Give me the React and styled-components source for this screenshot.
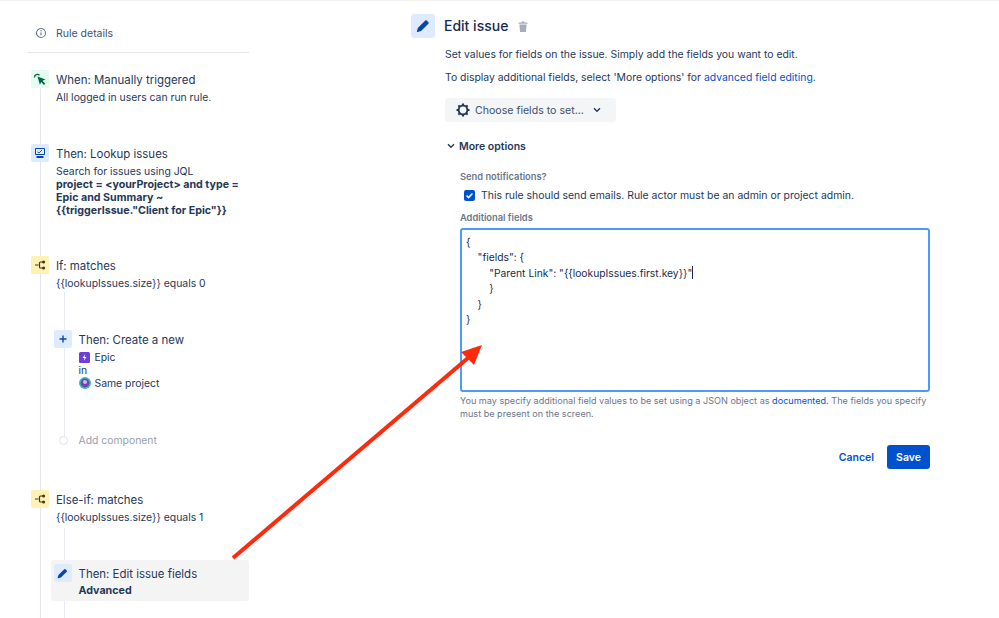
import React from 'react';
import styled, { createGlobalStyle } from 'styled-components';

const GlobalStyle = createGlobalStyle`
  html, body {
    margin: 0;
    padding: 0;
    background: #fff;
  }
  * {
    box-sizing: border-box;
  }
`;

const Page = styled.div`
  position: relative;
  width: 999px;
  height: 618px;
  overflow: hidden;
  display: flex;
  background: #fff;
  border-top: 1px solid #f1f1f1;
  font-family: Inter, "Liberation Sans", sans-serif;
  color: #253858;
`;

const Sidebar = styled.aside`
  width: 221px;
  margin-left: 28px;
  flex-shrink: 0;
`;

const DetailsRow = styled.div`
  display: flex;
  align-items: center;
  gap: 9px;
  height: 52px;
  padding: 13px 0 0 7px;
  border-bottom: 1px solid #e4e6ee;
  font-size: 10.5px;
  color: #42526e;
`;

const Timeline = styled.div`
  margin: 17px 0 0 12px;
  height: 560px;
  border-left: 1.5px solid #e3e5f0;
`;

const Step = styled.div`
  display: flex;
  gap: 7px;
  height: ${props => props.$height}px;
  margin-left: -10px;
`;

const IconBox = styled.div`
  width: 18px;
  height: 18px;
  flex-shrink: 0;
  display: flex;
  align-items: center;
  justify-content: center;
  border-radius: 2px;
  background: ${props => props.$bg};
`;

const StepBody = styled.div`
  padding-top: 2.5px;
`;

const StepTitle = styled.div`
  font-size: 11.45px;
  line-height: 15px;
  color: #253858;
`;

const StepText = styled.div`
  margin-top: 3px;
  font-size: 10.4px;
  line-height: 13px;
  color: #253858;
`;

const StrongText = styled.div`
  margin-top: ${props => props.$top || 0}px;
  font-size: 10.7px;
  line-height: 13px;
  font-weight: 700;
  color: #253858;
`;

const TypeLine = styled.div`
  display: flex;
  align-items: center;
  gap: 4px;
  font-size: 10.4px;
  line-height: 13px;
`;

const Nested = styled.div`
  margin: 0 0 ${props => props.$bottom || 0}px 22.5px;
  height: ${props => props.$height}px;
  padding-top: ${props => props.$top}px;
  border-left: 1.5px solid #e9ebf2;
`;

const NestedStep = styled.div`
  display: flex;
  gap: 7px;
  margin-left: -11px;
  height: 104px;
`;

const AddRow = styled.div`
  display: flex;
  align-items: center;
  gap: 11px;
  margin-left: -6px;
  font-size: 10.4px;
  line-height: 13px;
  color: #97a0af;
`;

const AddDot = styled.span`
  width: 9px;
  height: 9px;
  border-radius: 50%;
  background: #fff;
  border: 1.5px solid #dfe1e6;
`;

const SelectedStep = styled.div`
  display: flex;
  gap: 7px;
  width: 198px;
  height: 41px;
  margin-left: -14px;
  padding: 4px 3px;
  border-radius: 3px;
  background: #f4f4f5;
`;

const Main = styled.main`
  margin-left: 161px;
  width: 520px;
  padding-top: 13px;
`;

const Header = styled.header`
  display: flex;
  align-items: center;
  gap: 9px;
  margin-left: 1px;
`;

const HeaderIcon = styled.div`
  width: 24px;
  height: 24px;
  display: flex;
  align-items: center;
  justify-content: center;
  border-radius: 3px;
  background: #deebff;
`;

const Title = styled.h1`
  margin: 0 1px 0 0;
  font-size: 14px;
  line-height: 24px;
  font-weight: 500;
  color: #172b4d;
`;

const Content = styled.div`
  padding-left: 35px;
`;

const Paragraph = styled.p`
  margin: ${props => props.$top}px 0 0;
  font-size: 10.4px;
  line-height: 14px;
  color: #253858;
`;

const Link = styled.a`
  color: #0052cc;
`;

const FieldButton = styled.div`
  display: inline-flex;
  align-items: center;
  width: 171px;
  height: 24px;
  margin-top: 13px;
  padding-left: 11px;
  border-radius: 3px;
  background: #f4f5f7;
  font-size: 10.6px;
  color: #42526e;
`;

const ButtonLabel = styled.span`
  margin: 0 9px 0 5px;
`;

const Expander = styled.div`
  display: flex;
  align-items: center;
  gap: 4px;
  margin: 16px 0 0 2px;
  height: 16px;
  font-size: 10.5px;
  font-weight: 600;
  color: #253858;
`;

const Options = styled.div`
  padding-left: 15px;
`;

const FieldLabel = styled.div`
  margin-top: ${props => props.$top}px;
  font-size: 9.3px;
  line-height: 12px;
  font-weight: 600;
  color: #6b778c;
`;

const CheckRow = styled.div`
  display: flex;
  align-items: center;
  gap: 6px;
  height: 14px;
  margin: 5px 0 0 4px;
  font-size: 10.45px;
  color: #253858;
`;

const CheckBox = styled.span`
  width: 11px;
  height: 11px;
  display: flex;
  align-items: center;
  justify-content: center;
  border-radius: 2px;
  background: #0052cc;
`;

const CodeBox = styled.div`
  width: 470px;
  height: 164px;
  margin-top: 4px;
  padding: 5px 4px;
  border: 2px solid #4c9aff;
  border-radius: 3px;
  font-size: 10.3px;
  line-height: 15.4px;
  color: #172b4d;
  white-space: pre;
`;

const Caret = styled.span`
  display: inline-block;
  width: 1px;
  height: 13px;
  vertical-align: -2px;
  background: #172b4d;
`;

const Helper = styled.p`
  width: 475px;
  margin: 3px 0 0;
  font-size: 9.1px;
  line-height: 12.5px;
  color: #6b778c;
`;

const Actions = styled.div`
  display: flex;
  align-items: center;
  justify-content: flex-end;
  gap: 13px;
  width: 470px;
  margin-top: 25px;
`;

const CancelButton = styled.span`
  font-size: 10.5px;
  font-weight: 600;
  color: #0052cc;
`;

const SaveButton = styled.span`
  width: 43px;
  height: 24px;
  display: flex;
  align-items: center;
  justify-content: center;
  border-radius: 3px;
  background: #0052cc;
  font-size: 10.5px;
  font-weight: 600;
  color: #fff;
`;

const ArrowOverlay = styled.svg`
  position: absolute;
  top: -1px;
  left: 0;
  pointer-events: none;
`;

const InfoIcon = () => (
  <svg width="12" height="12" viewBox="0 0 12 12" fill="none">
    <circle cx="6" cy="6" r="4.5" stroke="#6b778c" strokeWidth="1.1" />
    <path d="M6 5.4v2.8" stroke="#6b778c" strokeWidth="1.2" />
    <circle cx="6" cy="3.8" r=".7" fill="#6b778c" />
  </svg>
);

const TriggerIcon = () => (
  <svg width="14" height="14" viewBox="0 0 14 14" fill="none">
    <path d="M1.5 5.5a3 3 0 0 1 5-2.3" stroke="#006644" strokeWidth="1.3" />
    <path d="M4.5 4.5l8 3-3 1.3 2.8 3-1.4 1.2-2.6-3-1.4 2.8z" fill="#006644" />
  </svg>
);

const LookupIcon = () => (
  <svg width="12" height="12" viewBox="0 0 12 12" fill="none">
    <rect x="1" y="1" width="10" height="7" rx="1" fill="#0747a6" />
    <rect x="2" y="2" width="8" height="5" fill="#deebff" />
    <path d="M3.5 5l1.5 1 3-3" stroke="#0747a6" strokeWidth=".9" />
    <rect x="2.5" y="9" width="7" height="2" rx=".5" fill="#0747a6" />
  </svg>
);

const BranchIcon = () => (
  <svg width="12" height="12" viewBox="0 0 12 12" fill="none" stroke="#403a1f" strokeWidth="1.2">
    <path d="M1 6h3.5M9 3H6.5a1 1 0 0 0-1 1v4a1 1 0 0 0 1 1H9" />
    <circle cx="9.6" cy="3" r=".9" fill="#403a1f" />
    <circle cx="9.6" cy="9" r=".9" fill="#403a1f" />
  </svg>
);

const PlusIcon = () => (
  <svg width="10" height="10" viewBox="0 0 10 10" fill="none">
    <path d="M5 1.5v7M1.5 5h7" stroke="#0747a6" strokeWidth="1.4" />
  </svg>
);

const PencilIcon = ({ size }) => (
  <svg width={size} height={size} viewBox="0 0 14 14" fill="none">
    <path d="M9.3 1.6a1 1 0 0 1 1.4 0l1.7 1.7a1 1 0 0 1 0 1.4L5 12.1l-3.6.9a.4.4 0 0 1-.5-.5l.9-3.6z" fill="#0747a6" />
  </svg>
);

const EpicIcon = () => (
  <svg width="12" height="11" viewBox="0 0 12 11">
    <rect width="11" height="11" rx="1.5" fill="#6d3fd6" />
    <path d="M6.3 2L3.5 6h2l-.8 3 2.8-4h-2z" fill="#fff" />
  </svg>
);

const ProjectIcon = () => (
  <svg width="12" height="12" viewBox="0 0 12 12">
    <circle cx="6" cy="6" r="6" fill="#35bdb5" />
    <circle cx="6" cy="6" r="4.4" fill="#7a3fb0" />
    <circle cx="6" cy="5" r="2" fill="#b9c6e8" />
  </svg>
);

const TrashIcon = () => (
  <svg width="10" height="11" viewBox="0 0 10 11">
    <path d="M0.5 1.5h3l.4-1h2.2l.4 1h3v1.2h-9z" fill="#a5adba" />
    <path d="M1.4 3.4h7.2l-.6 7a.6.6 0 0 1-.6.6H2.6a.6.6 0 0 1-.6-.6z" fill="#a5adba" />
  </svg>
);

const GearIcon = () => (
  <svg width="14" height="14" viewBox="0 0 14 14" fill="none">
    <circle cx="7" cy="7" r="4.4" stroke="#253858" strokeWidth="2" />
    <g stroke="#253858" strokeWidth="2">
      <path d="M7 0.5v2M7 11.5v2M0.5 7h2M11.5 7h2" />
      <path d="M2.4 2.4l1.4 1.4M10.2 10.2l1.4 1.4M2.4 11.6l1.4-1.4M10.2 3.8l1.4-1.4" />
    </g>
  </svg>
);

const Chevron = () => (
  <svg width="8" height="6" viewBox="0 0 8 6" fill="none">
    <path d="M1 1.2l3 3 3-3" stroke="#253858" strokeWidth="1.4" />
  </svg>
);

const CheckMark = () => (
  <svg width="9" height="9" viewBox="0 0 9 9" fill="none">
    <path d="M1.6 4.6l2 2 3.8-4" stroke="#fff" strokeWidth="1.5" />
  </svg>
);

const codeBefore = `{
    "fields": {
        "Parent Link": "{{lookupIssues.first.key}}"`;
const codeAfter = `
        }
    }
}`;

export default function App() {
  return (
    <Page>
      <GlobalStyle />
      <Sidebar>
        <DetailsRow>
          <InfoIcon />
          Rule details
        </DetailsRow>
        <Timeline>
          <Step $height={74}>
            <IconBox $bg="#e3fcef"><TriggerIcon /></IconBox>
            <StepBody>
              <StepTitle>When: Manually triggered</StepTitle>
              <StepText>All logged in users can run rule.</StepText>
            </StepBody>
          </Step>
          <Step $height={112}>
            <IconBox $bg="#deebff"><LookupIcon /></IconBox>
            <StepBody>
              <StepTitle>Then: Lookup issues</StepTitle>
              <StepText>Search for issues using JQL</StepText>
              <StrongText>
                project = &lt;yourProject&gt; and type =<br />
                Epic and Summary ~<br />
                {'{{triggerIssue."Client for Epic"}}'}
              </StrongText>
            </StepBody>
          </Step>
          <Step $height={36}>
            <IconBox $bg="#fff0b3"><BranchIcon /></IconBox>
            <StepBody>
              <StepTitle>If: matches</StepTitle>
              <StepText>{'{{lookupIssues.size}} equals 0'}</StepText>
            </StepBody>
          </Step>
          <Nested $height={148} $top={38} $bottom={50}>
            <NestedStep>
              <IconBox $bg="#deebff"><PlusIcon /></IconBox>
              <StepBody>
                <StepTitle>Then: Create a new</StepTitle>
                <StepText>
                  <TypeLine><EpicIcon />Epic</TypeLine>
                  in
                  <TypeLine><ProjectIcon />Same project</TypeLine>
                </StepText>
              </StepBody>
            </NestedStep>
            <AddRow><AddDot />Add component</AddRow>
          </Nested>
          <Step $height={38}>
            <IconBox $bg="#fff0b3"><BranchIcon /></IconBox>
            <StepBody>
              <StepTitle>Else-if: matches</StepTitle>
              <StepText>{'{{lookupIssues.size}} equals 1'}</StepText>
            </StepBody>
          </Step>
          <Nested $height={90} $top={32}>
            <SelectedStep>
              <IconBox $bg="#deebff"><PencilIcon size={11} /></IconBox>
              <StepBody>
                <StepTitle>Then: Edit issue fields</StepTitle>
                <StrongText $top={2}>Advanced</StrongText>
              </StepBody>
            </SelectedStep>
          </Nested>
        </Timeline>
      </Sidebar>
      <Main>
        <Header>
          <HeaderIcon><PencilIcon size={14} /></HeaderIcon>
          <Title>Edit issue</Title>
          <TrashIcon />
        </Header>
        <Content>
          <Paragraph $top={10}>Set values for fields on the issue. Simply add the fields you want to edit.</Paragraph>
          <Paragraph $top={9}>
            To display additional fields, select 'More options' for <Link>advanced field editing</Link>.
          </Paragraph>
          <FieldButton>
            <GearIcon />
            <ButtonLabel>Choose fields to set...</ButtonLabel>
            <Chevron />
          </FieldButton>
          <Expander><Chevron />More options</Expander>
          <Options>
            <FieldLabel $top={17}>Send notifications?</FieldLabel>
            <CheckRow>
              <CheckBox><CheckMark /></CheckBox>
              This rule should send emails. Rule actor must be an admin or project admin.
            </CheckRow>
            <FieldLabel $top={10}>Additional fields</FieldLabel>
            <CodeBox>{codeBefore}<Caret />{codeAfter}</CodeBox>
            <Helper>
              You may specify additional field values to be set using a JSON object as <Link>documented</Link>. The fields you specify must be present on the screen.
            </Helper>
            <Actions>
              <CancelButton>Cancel</CancelButton>
              <SaveButton>Save</SaveButton>
            </Actions>
          </Options>
        </Content>
      </Main>
      <ArrowOverlay width="999" height="618" viewBox="0 0 999 618">
        <path d="M233 558L468 358" stroke="#ff2a0c" strokeWidth="4" />
        <path d="M482 345L461 352L474 365z" fill="#ff2a0c" />
      </ArrowOverlay>
    </Page>
  );
}
